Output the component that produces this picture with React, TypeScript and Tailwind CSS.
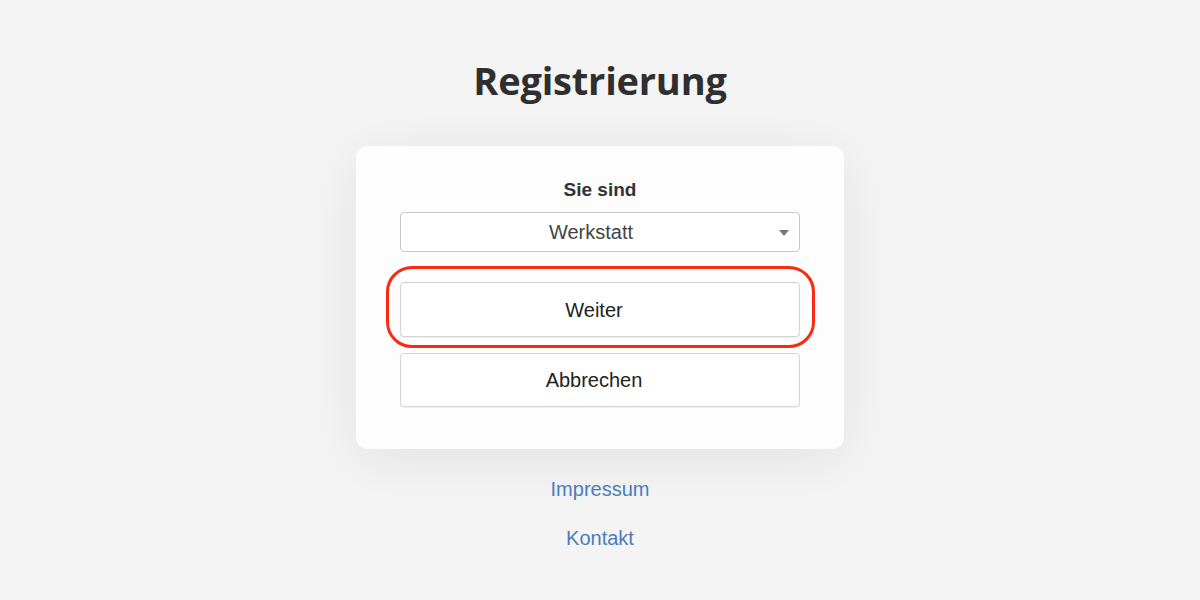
export default function App() {
  return (
    <div className="min-h-[600px] w-full bg-[#f4f4f4] flex flex-col items-center font-['Liberation_Sans',Arial,sans-serif]">
      <h1 className="mt-[56px] text-[38px] leading-[48px] font-bold text-[#2f2f2f] font-['Open_Sans',sans-serif] tracking-[-0.2px]">
        Registrierung
      </h1>
      <div className="mt-[42px] w-[488px] h-[303px] bg-[#fdfdfd] rounded-[12px] shadow-[0_10px_60px_rgba(0,0,0,0.08)] flex flex-col items-center pt-[32px]">
        <div className="text-[19px] leading-[24px] font-bold text-[#333]">Sie sind</div>
        <div className="relative mt-[10px] w-[400px] h-[40px] bg-white border border-[#c8c8c8] rounded-[4px] flex items-center justify-center pr-[18px] text-[20px] text-[#444]">
          Werkstatt
          <svg className="absolute right-[10px] top-[17px]" width="10" height="6" viewBox="0 0 10 6">
            <path d="M0 0 L10 0 L5 6 Z" fill="#777" />
          </svg>
        </div>
        <div className="relative mt-[30px] w-[400px]">
          <div className="absolute -left-[14px] -right-[15px] -top-[16px] -bottom-[11px] border-[3px] border-[#fa2a12] rounded-[26px]" />
          <button className="w-[400px] h-[55px] bg-white border border-[#d4d4d4] rounded-[4px] pr-[12px] text-[20px] text-[#222] shadow-[0_1px_1px_rgba(0,0,0,0.06)]">
            Weiter
          </button>
        </div>
        <button className="mt-[16px] w-[400px] h-[54px] bg-white border border-[#d4d4d4] rounded-[4px] pr-[12px] text-[20px] text-[#222] shadow-[0_1px_1px_rgba(0,0,0,0.06)]">
          Abbrechen
        </button>
      </div>
      <a className="mt-[28px] text-[20px] leading-[24px] text-[#4a7dbd]">Impressum</a>
      <a className="mt-[25px] text-[20px] leading-[24px] text-[#4a7dbd]">Kontakt</a>
    </div>
  )
}
